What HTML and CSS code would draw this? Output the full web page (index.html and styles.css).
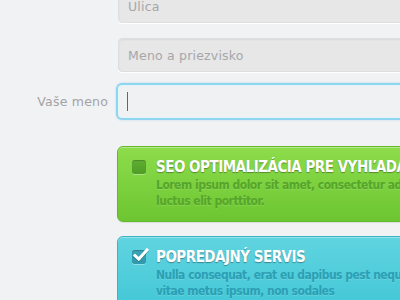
FILE: index.html
```html
<!DOCTYPE html>
<html lang="sk">
<head>
<meta charset="utf-8">
<link rel="stylesheet" href="styles.css">
</head>
<body>
<div class="form">
  <div class="row">
    <span class="label"></span>
    <div class="input"><span class="ph">Ulica</span></div>
  </div>
  <div class="row">
    <span class="label"></span>
    <div class="input"><span class="ph">Meno a priezvisko</span></div>
  </div>
  <div class="row row-focus">
    <span class="label">Vaše meno</span>
    <div class="input focus"><span class="caret"></span></div>
  </div>
  <div class="row row-card">
    <span class="label"></span>
    <div class="card green">
      <span class="check"></span>
      <div class="card-text">
        <div class="title">SEO OPTIMALIZÁCIA PRE VYHĽADÁVAČE</div>
        <div class="desc">Lorem ipsum dolor sit amet, consectetur adipiscing elit. Nam<br>luctus elit porttitor.</div>
      </div>
    </div>
  </div>
  <div class="row row-card2">
    <span class="label"></span>
    <div class="card blue">
      <span class="check checked">
        <svg width="16" height="14" viewBox="0 0 16 14"><path d="M2 7.5 L5.8 11 L14 2" fill="none" stroke="#fff" stroke-width="3" stroke-linecap="square"/></svg>
      </span>
      <div class="card-text">
        <div class="title">POPREDAJNÝ SERVIS</div>
        <div class="desc">Nulla consequat, erat eu dapibus pest neque, ut<br>vitae metus ipsum, non sodales</div>
      </div>
    </div>
  </div>
</div>
</body>
</html>
```

FILE: styles.css
```css
html, body {
  margin: 0;
  padding: 0;
}
body {
  width: 400px;
  height: 300px;
  overflow: hidden;
  background: #f1f2f4;
  font-family: "DejaVu Sans", sans-serif;
}
.form {
  margin-top: -11px;
  display: flex;
  flex-direction: column;
}
.row {
  display: grid;
  grid-template-columns: 108px 340px;
  column-gap: 10px;
  align-items: center;
  margin-bottom: 15px;
}
.row-focus {
  margin-top: -4px;
  column-gap: 8px;
  margin-bottom: 26px;
  grid-template-columns: 108px 342px;
}
.row-card { margin-bottom: 14px; column-gap: 9px; }
.row-card2 { column-gap: 9px; }
.label {
  text-align: right;
  font-size: 12.5px;
  color: #a3a3a5;
  letter-spacing: 0.2px;
}
.input {
  box-sizing: border-box;
  height: 34px;
  border-radius: 4px;
  background: #e7e7e8;
  border: 1px solid #dedee0;
  box-shadow: inset 0 1px 2px rgba(0,0,0,0.06), 0 1px 0 #fff;
  display: flex;
  align-items: center;
  padding-left: 9px;
}
.ph {
  font-size: 12.5px;
  color: #a6a6a8;
  letter-spacing: 0.2px;
}
.input.focus {
  height: 37px;
  background: #f0f1f3;
  border: 2px solid #8fd5ef;
  box-shadow: inset 0 0 0 1px #e4f5fb, 0 0 2px rgba(120,200,230,0.5);
  border-radius: 6px;
  padding-left: 9px;
}
.caret {
  width: 1px;
  height: 19px;
  background: #666;
}
.card {
  box-sizing: border-box;
  border-radius: 6px;
  display: flex;
  align-items: flex-start;
  padding: 12px 0 14px 14px;
  gap: 10px;
  font-family: "Liberation Sans Narrow", "DejaVu Sans Condensed", "Liberation Sans", sans-serif;
  font-stretch: condensed;
  font-weight: bold;
  overflow: hidden;
}
.green {
  height: 76px;
  background: linear-gradient(#8ddc4c, #6cc631);
  border: 1px solid #63b92c;
  box-shadow: inset 0 1px 0 rgba(255,255,255,0.35), 0 1px 1px rgba(0,0,0,0.08);
}
.blue {
  height: 90px;
  background: linear-gradient(#60d4e0, #3cc4d4);
  border: 1px solid #3cb4c4;
  box-shadow: inset 0 1px 0 rgba(255,255,255,0.35);
}
.check {
  flex: none;
  width: 14px;
  height: 14px;
  margin-top: 1px;
  border-radius: 3px;
  position: relative;
}
.green .check {
  background: linear-gradient(#5fae32, #4f9c27);
  box-shadow: inset 0 1px 1px rgba(0,0,0,0.2), 0 1px 0 rgba(255,255,255,0.35);
}
.blue .check {
  background: linear-gradient(#3aa4b8, #2f98ac);
  box-shadow: inset 0 1px 1px rgba(0,0,0,0.2), 0 1px 0 rgba(255,255,255,0.35);
}
.check svg {
  position: absolute;
  left: 1px;
  top: -2px;
  filter: drop-shadow(0 1px 0 rgba(0,0,0,0.25));
}
.card-text {
  display: flex;
  flex-direction: column;
  gap: 2px;
}
.title {
  font-size: 15px;
  line-height: 16px;
  color: #fff;
  white-space: nowrap;
  text-shadow: 0 1px 1px rgba(0,0,0,0.35);
  letter-spacing: -0.5px;
}
.desc {
  font-size: 12px;
  line-height: 16px;
  letter-spacing: -0.5px;
  white-space: nowrap;
}
.green .desc {
  color: #56a52b;
  text-shadow: 0 1px 0 rgba(255,255,255,0.15);
}
.blue .desc {
  color: #2b9fb4;
  text-shadow: 0 1px 0 rgba(255,255,255,0.15);
}
```
